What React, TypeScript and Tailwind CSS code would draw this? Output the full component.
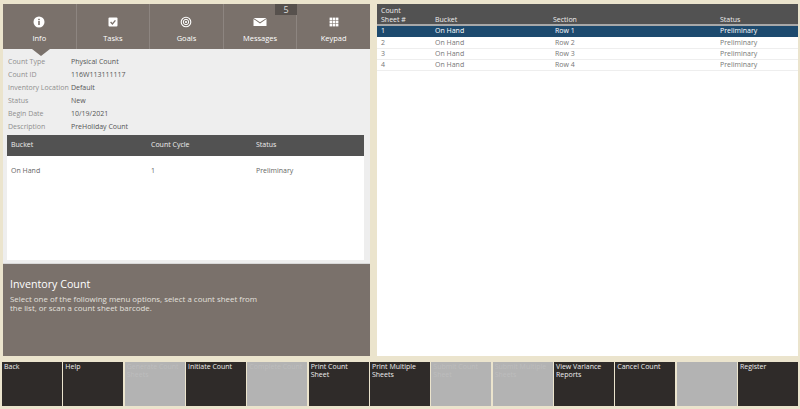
import type { ReactNode } from "react"

const font = { fontFamily: '"Open Sans", sans-serif' }

const InfoIcon = () => (
  <svg width="14" height="14" viewBox="0 0 14 14">
    <circle cx="7" cy="7" r="5.5" fill="#fff" />
    <rect x="6.2" y="6" width="1.6" height="4" fill="#7a716b" />
    <rect x="6.2" y="3.8" width="1.6" height="1.4" fill="#7a716b" />
  </svg>
)

const TasksIcon = () => (
  <svg width="14" height="14" viewBox="0 0 14 14">
    <rect x="2.5" y="2.5" width="9" height="9" rx="1" fill="#fff" />
    <path d="M4.6 7l1.8 1.9 3-3.6" fill="none" stroke="#7a716b" strokeWidth="1.3" />
  </svg>
)

const GoalsIcon = () => (
  <svg width="14" height="14" viewBox="0 0 14 14">
    <circle cx="7" cy="7" r="4.8" fill="none" stroke="#fff" strokeWidth="1.1" />
    <circle cx="7" cy="7" r="2.7" fill="none" stroke="#fff" strokeWidth="1" />
    <circle cx="7" cy="7" r="1.1" fill="#fff" />
  </svg>
)

const MailIcon = () => (
  <svg width="14" height="14" viewBox="0 0 14 14">
    <path d="M.5 3h13L7 7.2z" fill="#fff" />
    <path d="M.5 4v7h13V4L7 8.4z" fill="#fff" />
  </svg>
)

const KeypadIcon = () => (
  <svg width="14" height="14" viewBox="0 0 14 14" fill="#fff">
    {[2.6, 5.7, 8.8].map((y) =>
      [2.6, 5.7, 8.8].map((x) => <rect key={`${x}-${y}`} x={x} y={y} width="2.6" height="2.6" />),
    )}
  </svg>
)

const tabs: { label: string; icon: ReactNode }[] = [
  { label: "Info", icon: <InfoIcon /> },
  { label: "Tasks", icon: <TasksIcon /> },
  { label: "Goals", icon: <GoalsIcon /> },
  { label: "Messages", icon: <MailIcon /> },
  { label: "Keypad", icon: <KeypadIcon /> },
]

const details = [
  ["Count Type", "Physical Count"],
  ["Count ID", "116W113111117"],
  ["Inventory Location", "Default"],
  ["Status", "New"],
  ["Begin Date", "10/19/2021"],
  ["Description", "PreHoliday Count"],
]

const sheets = [1, 2, 3, 4]

const buttons = [
  { label: "Back" },
  { label: "Help" },
  { label: "Generate Count Sheets", off: true },
  { label: "Initiate Count" },
  { label: "Complete Count", off: true },
  { label: "Print Count Sheet" },
  { label: "Print Multiple Sheets" },
  { label: "Submit Count Sheet", off: true },
  { label: "Submit Multiple Sheets", off: true },
  { label: "View Variance Reports" },
  { label: "Cancel Count" },
  { label: "", off: true },
  { label: "Register" },
]

export default function App() {
  return (
    <div style={font} className="w-[800px] h-[409px] overflow-hidden bg-[#ebe4cd] flex flex-col">
      <div className="flex h-[356px] pt-[4px] pl-[3px] pr-[2px] gap-[7px]">
        <div className="w-[367px] flex flex-col">
          <div className="relative flex h-[45px] bg-[#7a716b] shrink-0">
            {tabs.map((t, i) => (
              <div
                key={t.label}
                className={`flex-1 flex flex-col items-center pt-[11px] text-[7.5px] leading-[10px] text-white ${i < 4 ? "border-r border-[#8d8580]" : ""}`}
              >
                {t.icon}
                <span className="mt-[4px]">{t.label}</span>
              </div>
            ))}
            <div className="absolute left-[272px] top-0 w-[22px] h-[11px] bg-[#57514d] text-[9px] leading-[11px] text-[#ddd] text-center">5</div>
            <div className="absolute left-[29px] top-[45px] w-0 h-0 border-x-[9px] border-x-transparent border-t-[7px] border-t-[#7a716b]" />
          </div>

          <div className="h-[215px] shrink-0 bg-[#eeeeee] pl-[4px] pr-[6px] pt-[7px] pb-[3px] flex flex-col border-b border-[#d9d9d9]">
            <div className="flex flex-col pb-[1px]">
              {details.map(([k, v]) => (
                <div key={k} className="flex h-[13px] items-center text-[7px] pl-[1px]">
                  <span className="w-[63px] whitespace-nowrap text-[#8f8f8f]">{k}</span>
                  <span className="text-[#555]">{v}</span>
                </div>
              ))}
            </div>
            <div className="flex-1 flex flex-col bg-white">
              <div className="flex h-[21px] items-center bg-[#525252] text-[7px] text-[#eee] shrink-0">
                <span className="w-[144px] pl-[4px]">Bucket</span>
                <span className="w-[105px]">Count Cycle</span>
                <span>Status</span>
              </div>
              <div className="flex items-center h-[30px] text-[7px] text-[#666]">
                <span className="w-[144px] pl-[4px]">On Hand</span>
                <span className="w-[105px]">1</span>
                <span>Preliminary</span>
              </div>
            </div>
          </div>

          <div className="flex-1 bg-[#7a716b] pl-[7px] pt-[13px] text-white">
            <h1 className="text-[10.7px] leading-[14px] font-normal">Inventory Count</h1>
            <p className="mt-[4px] w-[258px] text-[7.9px] leading-[9px] text-[#e3e0dd]">
              Select one of the following menu options, select a count sheet from the list, or scan a count sheet barcode.
            </p>
          </div>
        </div>

        <div className="flex-1 bg-white flex flex-col">
          <div className="flex h-[20px] items-end bg-[#525252] text-[7px] leading-[9px] text-[#eee] shrink-0">
            <span className="w-[58px] pl-[4px]">Count<br />Sheet #</span>
            <span className="w-[118px]">Bucket</span>
            <span className="w-[167px]">Section</span>
            <span>Status</span>
          </div>
          <div className="h-[2px] bg-[#a8a8a8] shrink-0" />
          {sheets.map((n, i) => (
            <div
              key={n}
              className={`flex items-center text-[7px] ${i === 0 ? "h-[11px] pb-[1px] mb-[1px] bg-[#1d4a6e] text-white" : "h-[11px] text-[#777] border-b border-[#eeeeee]"}`}
            >
              <span className="w-[58px] pl-[4px]">{n}</span>
              <span className="w-[120px]">On Hand</span>
              <span className="w-[165px]">Row {n}</span>
              <span>Preliminary</span>
            </div>
          ))}
        </div>
      </div>

      <div className="flex gap-[1.2px] pl-[2px] pr-[2px] pt-[6px]">
        {buttons.map((b, i) => (
          <div
            key={i}
            className={`flex-1 h-[44px] px-[2px] pt-[1px] text-[7px] leading-[8px] ${b.off ? "bg-[#b3b3b3] text-[#bdbdbd]" : "bg-[#2f2b29] text-[#eee]"}`}
          >
            {b.label}
          </div>
        ))}
      </div>
    </div>
  )
}
